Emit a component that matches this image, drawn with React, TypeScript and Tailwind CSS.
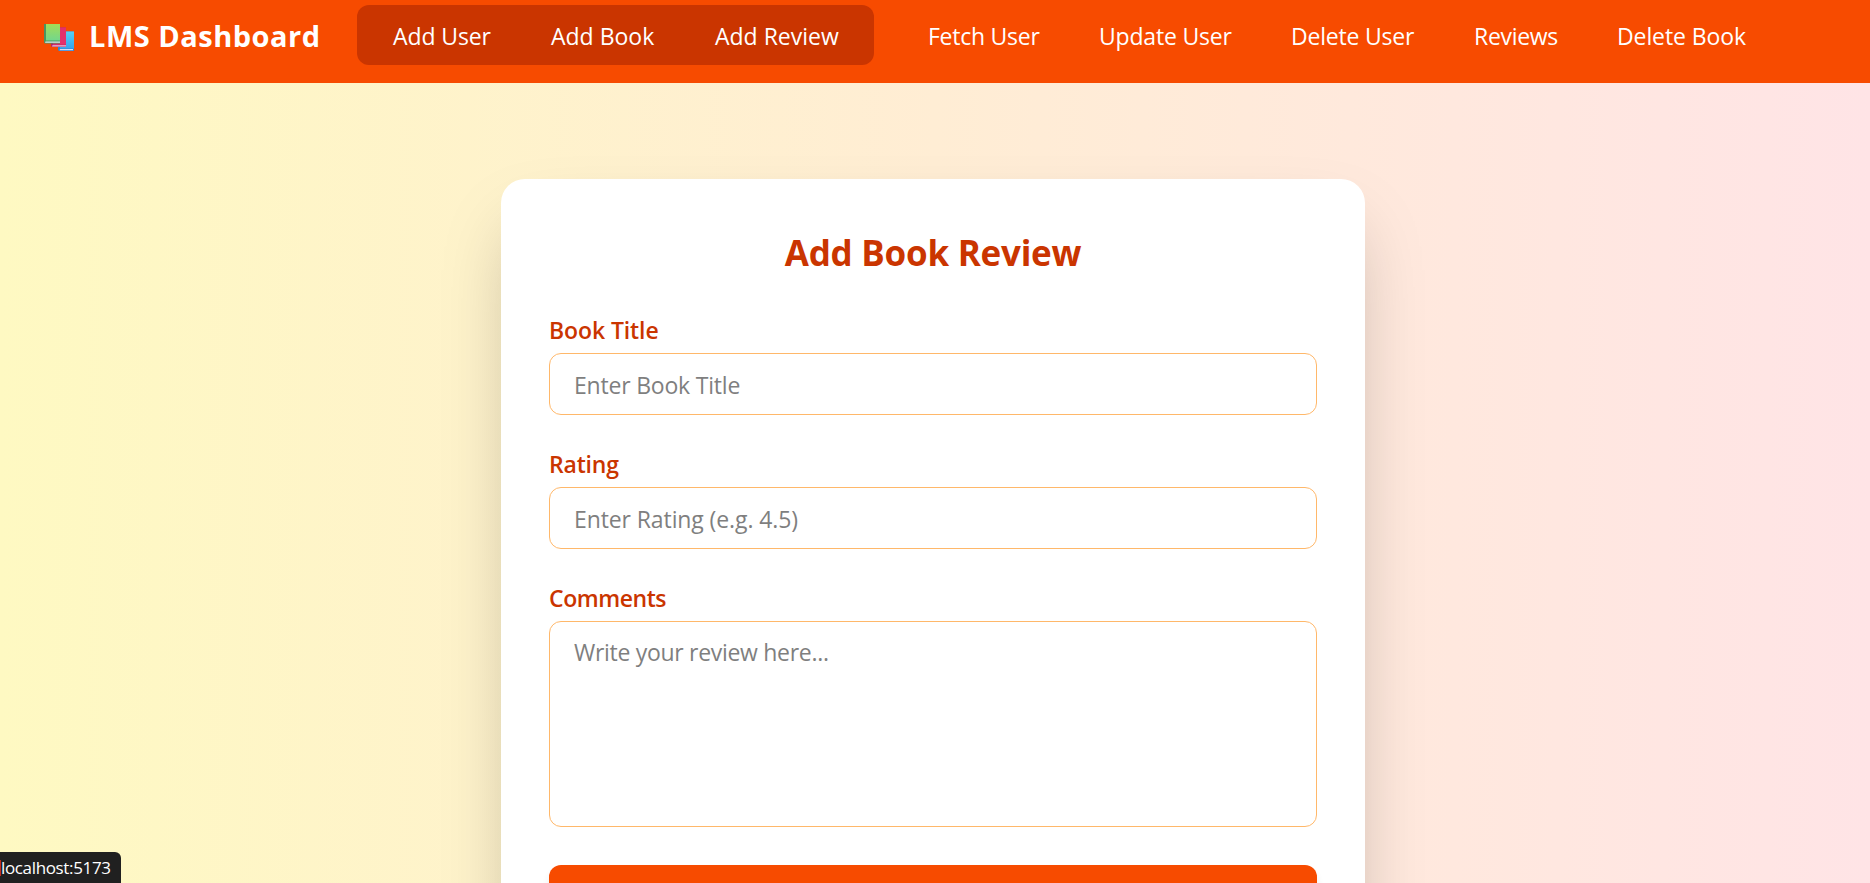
import type { ReactNode } from "react";

function BooksIcon() {
  return (
    <svg className="mt-0.5 h-[27px] w-[30px] shrink-0" viewBox="0 0 30 27" aria-hidden="true">
      <defs>
        <linearGradient id="blue" x1="0" y1="0" x2="0" y2="1">
          <stop offset="0" stopColor="#54d0f4" />
          <stop offset="1" stopColor="#36a5ee" />
        </linearGradient>
        <linearGradient id="green" x1="0" y1="0" x2="0" y2="1">
          <stop offset="0" stopColor="#a3dc57" />
          <stop offset="1" stopColor="#72d78c" />
        </linearGradient>
      </defs>
      <path d="M14 7.5h15.5a.5.5 0 0 1 .5.5v19H15l-1-1z" fill="#2f86d8" />
      <path d="M16 7.5h14v17H16z" fill="url(#blue)" />
      <path d="M16 25h13v1.2H15.5z" fill="#d3dcf3" />
      <path d="M7 3.5h15v19.5H8l-1-1z" fill="#b5236a" />
      <path d="M9 3.5h13v17.2H9z" fill="#e3306c" />
      <path d="M8.5 21.2H22v1.2H8z" fill="#ecc7dc" />
      <path d="M0 0h16v19.5H1l-1-1z" fill="#4a9561" />
      <path d="M2 0h14v16.5H2z" fill="url(#green)" />
      <path d="M1.5 17.6H16v1.2H1z" fill="#dce8ee" />
    </svg>
  );
}

function NavLink({ className, children }: { className: string; children: ReactNode }) {
  return (
    <a href="#" className={`shrink-0 whitespace-nowrap text-[23px] leading-9 text-white ${className}`}>
      {children}
    </a>
  );
}

function Field({ label, labelClass, children }: { label: string; labelClass: string; children: ReactNode }) {
  return (
    <label className="flex flex-col">
      <span className={`mb-[5px] h-9 text-[23px] leading-9 font-semibold text-[#ca3500] ${labelClass}`}>{label}</span>
      {children}
    </label>
  );
}

export default function App() {
  return (
    <div className="relative flex h-[883px] flex-col overflow-hidden bg-linear-to-r/srgb from-[#fef9c2] via-[#ffedd4] to-[#ffe4e6] font-['Open_Sans','Noto_Sans',sans-serif]">
      <header className="flex h-[83px] shrink-0 items-start bg-[#f74b00] pt-[5px] pl-11">
        <div className="flex h-[60px] w-[313px] shrink-0 items-center gap-[15px] pt-0.5">
          <BooksIcon />
          <h1 className="text-[29px] leading-10 font-bold tracking-[0.5px] whitespace-nowrap text-white">
            LMS Dashboard
          </h1>
        </div>
        <nav className="flex h-[60px] items-center">
          <div className="flex h-[60px] w-[517px] shrink-0 items-center rounded-xl bg-[#ca3500] pt-0.5 pl-9">
            <NavLink className="w-[158px] tracking-[-0.1px]">Add User</NavLink>
            <NavLink className="w-[164px]">Add Book</NavLink>
            <NavLink className="">Add Review</NavLink>
          </div>
          <div className="flex items-center pt-0.5 pl-[54px]">
            <NavLink className="w-[171px] tracking-[-0.25px]">Fetch User</NavLink>
            <NavLink className="w-[192px] tracking-[-0.2px]">Update User</NavLink>
            <NavLink className="w-[183px] tracking-[-0.2px]">Delete User</NavLink>
            <NavLink className="w-[143px] tracking-[-0.3px]">Reviews</NavLink>
            <NavLink className="tracking-[-0.1px]">Delete Book</NavLink>
          </div>
        </nav>
      </header>

      <main className="flex min-h-0 flex-1 justify-center pt-24 pr-1">
        <form className="flex h-[840px] w-[864px] shrink-0 flex-col rounded-3xl bg-white px-12 pt-[47px] shadow-[0_37.5px_75px_-18px_rgba(0,0,0,0.27)]">
          <h2 className="mb-8 h-[54px] text-center text-[35px] leading-[54px] font-bold tracking-[-0.25px] text-[#ca3500]">
            Add Book Review
          </h2>
          <div className="flex flex-col gap-[31px]">
            <Field label="Book Title" labelClass="tracking-[-0.1px]">
              <input
                placeholder="Enter Book Title"
                className="h-[62px] w-full rounded-xl border border-[#ffb86a] px-6 pt-0.5 text-[23px] tracking-[-0.2px] placeholder:text-[#7f7f7f]"
              />
            </Field>
            <Field label="Rating" labelClass="tracking-[-0.2px]">
              <input
                placeholder="Enter Rating (e.g. 4.5)"
                className="h-[62px] w-full rounded-xl border border-[#ffb86a] px-6 pt-0.5 text-[23px] tracking-[-0.1px] placeholder:text-[#7f7f7f]"
              />
            </Field>
            <Field label="Comments" labelClass="tracking-[-0.45px]">
              <textarea
                placeholder="Write your review here..."
                className="h-[206px] w-full resize-none rounded-xl border border-[#ffb86a] px-6 pt-3 pb-3 text-[23px] leading-9 tracking-[-0.3px] placeholder:text-[#7f7f7f]"
              />
            </Field>
          </div>
          <button
            type="button"
            aria-label="Submit"
            className="mt-[38px] h-[60px] rounded-xl bg-[#f74b00] shadow-[0_6px_9px_-1px_rgba(0,0,0,0.1)]"
          />
        </form>
      </main>

      <div className="absolute bottom-0 left-0 flex h-[31px] w-[121px] items-center rounded-tr-md bg-[#202020] text-[17px] tracking-[-0.35px] whitespace-nowrap text-white">
        <span className="h-4 w-px bg-[#c42b1c]" />
        localhost:5173
      </div>
    </div>
  );
}
